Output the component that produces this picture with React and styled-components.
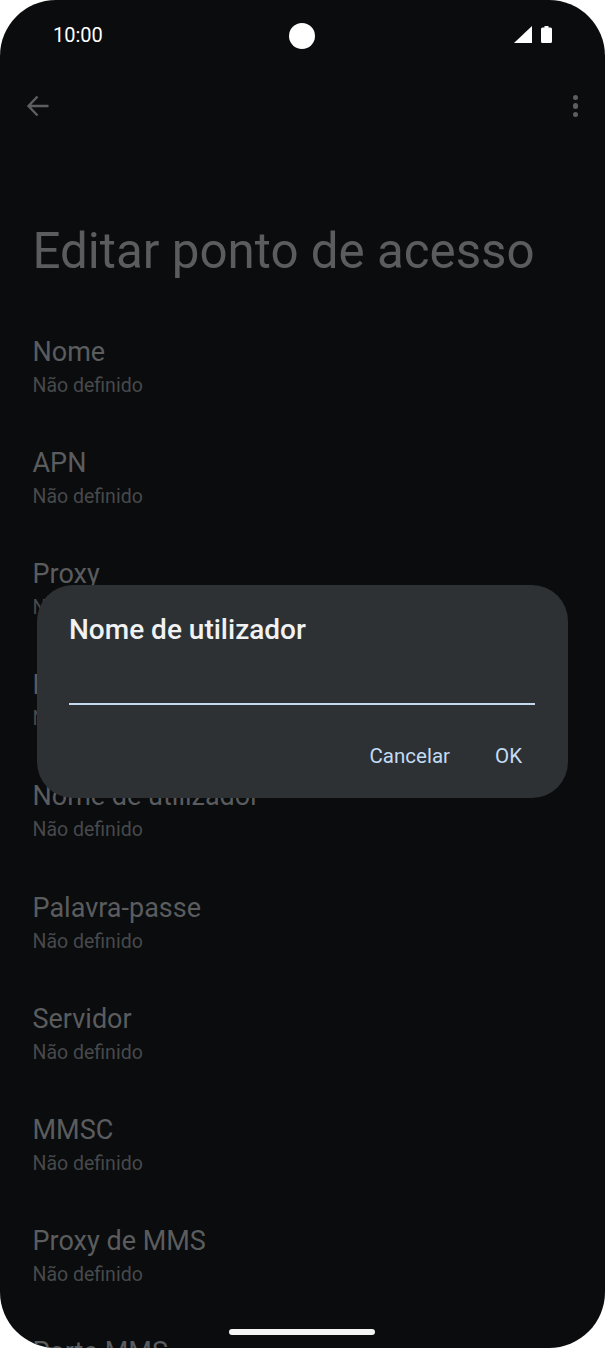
import React from "react";
import styled, { createGlobalStyle } from "styled-components";

const fields = [
  "Nome",
  "APN",
  "Proxy",
  "Porta",
  "Nome de utilizador",
  "Palavra-passe",
  "Servidor",
  "MMSC",
  "Proxy de MMS",
  "Porta MMS",
];

const App = () => (
  <>
    <GlobalStyle />
    <Phone>
      <StatusBar>
        <Clock>10:00</Clock>
        <StatusIcons>
          <svg width="18" height="17" viewBox="0 0 18 17">
            <path d="M0 17 L18 0 V17 Z" fill="#fff" />
          </svg>
          <svg width="11" height="17" viewBox="0 0 11 17">
            <path
              d="M3.500 0h4v1.500h2q1.500 0 1.500 1.500v12.500q0 1.500-1.500 1.500h-8Q0 17 0 15.500V3q0-1.500 1.500-1.500h2z"
              fill="#fff"
            />
          </svg>
        </StatusIcons>
      </StatusBar>
      <Camera />
      <ActionBar>
        <svg width="26" height="26" viewBox="0 0 26 26" fill="none">
          <path
            d="M23.500 13H4M12.500 3.500L3.500 13l9 9.500"
            stroke="#5d5e60"
            strokeWidth="2.400"
          />
        </svg>
        <MoreDots>
          <Dot />
          <Dot />
          <Dot />
        </MoreDots>
      </ActionBar>
      <Title>Editar ponto de acesso</Title>
      <FieldList>
        {fields.map((name) => (
          <Field key={name}>
            <FieldName>{name}</FieldName>
            <FieldValue>Não definido</FieldValue>
          </Field>
        ))}
      </FieldList>
      <Dialog>
        <DialogTitle>Nome de utilizador</DialogTitle>
        <Input />
        <DialogActions>
          <TextButton>Cancelar</TextButton>
          <TextButton>OK</TextButton>
        </DialogActions>
      </Dialog>
      <HomeBar />
    </Phone>
  </>
);

export default App;

const GlobalStyle = createGlobalStyle`
  html, body {
    margin: 0;
    padding: 0;
    background: #fff;
  }
  body {
    font-family: Roboto, "Noto Sans", sans-serif;
  }
`;

const Phone = styled.div`
  position: relative;
  width: 605px;
  height: 1348px;
  overflow: hidden;
  border-radius: 56px;
  background: #0a0c0e;
  box-sizing: border-box;
`;

const StatusBar = styled.div`
  display: flex;
  align-items: center;
  justify-content: space-between;
  height: 20px;
  padding: 25px 53px 0 53px;
`;

const Clock = styled.div`
  font-size: 20px;
  color: #fff;
  line-height: 20px;
`;

const StatusIcons = styled.div`
  display: flex;
  align-items: center;
  gap: 9px;
  margin-top: -2px;
`;

const Camera = styled.div`
  position: absolute;
  top: 23px;
  left: 289px;
  width: 26px;
  height: 26px;
  border-radius: 50%;
  background: #fff;
`;

const ActionBar = styled.div`
  display: flex;
  align-items: center;
  justify-content: space-between;
  height: 26px;
  margin-top: 48px;
  padding: 0 27px 0 25px;
`;

const MoreDots = styled.div`
  display: flex;
  flex-direction: column;
  gap: 3px;
`;

const Dot = styled.span`
  width: 5.500px;
  height: 5.500px;
  border-radius: 50%;
  background: #5d5e60;
`;

const Title = styled.h1`
  margin: 102px 0 0 32.500px;
  font-size: 49.300px;
  font-weight: 400;
  line-height: 60px;
  color: #5b5c5e;
  white-space: nowrap;
`;

const FieldList = styled.div`
  display: flex;
  flex-direction: column;
  margin: 54px 0 0 32.500px;
`;

const Field = styled.div`
  height: 111.120px;
  flex: none;
`;

const FieldName = styled.div`
  font-size: 27px;
  line-height: 34px;
  color: #5b5c5e;
`;

const FieldValue = styled.div`
  font-size: 19.500px;
  line-height: 24px;
  margin-top: 5px;
  color: #47494b;
`;

const Dialog = styled.div`
  position: absolute;
  top: 585px;
  left: 37px;
  width: 531px;
  height: 213px;
  border-radius: 36px;
  background: #2e3134;
  box-sizing: border-box;
  padding: 28px 33px 0 32px;
`;

const DialogTitle = styled.div`
  font-size: 28px;
  line-height: 34px;
  font-weight: 500;
  color: #f1f2f3;
`;

const Input = styled.div`
  height: 2px;
  margin-top: 56px;
  background: #c4d9ef;
`;

const DialogActions = styled.div`
  display: flex;
  justify-content: flex-end;
  gap: 45px;
  margin-top: 39px;
  padding-right: 13px;
`;

const TextButton = styled.div`
  font-size: 20.500px;
  line-height: 24px;
  font-weight: 400;
  color: #c2dcf5;
`;

const HomeBar = styled.div`
  position: absolute;
  left: 229px;
  top: 1329px;
  width: 146px;
  height: 6px;
  border-radius: 3px;
  background: #f4f4f4;
`;
